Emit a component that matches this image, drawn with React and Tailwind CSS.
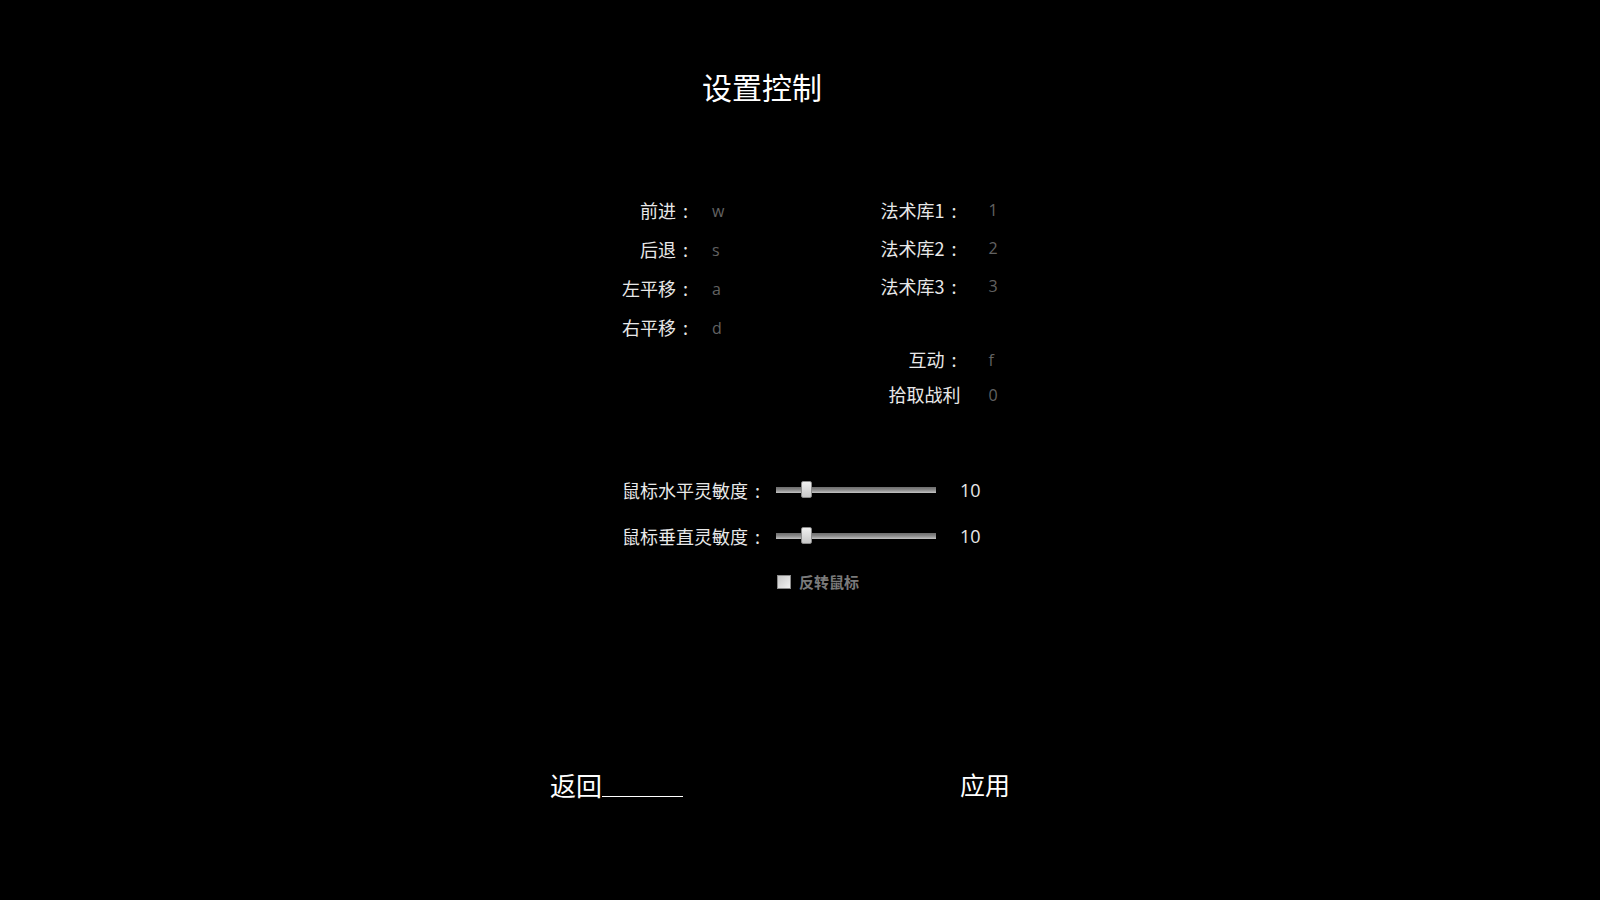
import React from "react";

const leftKeys = [
  { label: "前进", key: "w" },
  { label: "后退", key: "s" },
  { label: "左平移", key: "a" },
  { label: "右平移", key: "d" },
];

const rightKeys = [
  { label: "法术库1", key: "1" },
  { label: "法术库2", key: "2" },
  { label: "法术库3", key: "3" },
];

const extraKeys = [
  { label: "互动", key: "f", colon: true },
  { label: "拾取战利", key: "0", colon: false },
];

function Label({ text, colon = true, className = "" }) {
  return (
    <span className={`text-right text-[18px] text-[#e8e8e8] whitespace-nowrap ${className}`}>
      {text}
      {colon && <span className="ml-[7px]">:</span>}
    </span>
  );
}

function KeyRow({ label, value, colon, labelW, gap, h }) {
  return (
    <div className={`flex items-center ${h}`}>
      <Label text={label} colon={colon} className={labelW} />
      <span
        className={`${gap} text-[16px] text-[#626262] font-['Open_Sans','Noto_Sans_CJK_SC',sans-serif]`}
      >
        {value}
      </span>
    </div>
  );
}

function Slider({ label, value, thumb }) {
  return (
    <div className="flex items-center h-[46px]">
      <Label text={label} className="w-[140px] ml-[620px]" />
      <div className="relative ml-[16px] w-[160px] h-[6px] bg-gradient-to-b from-[#6c6c6c] via-[#8a8a8a] to-[#c4c4c4]">
        <div
          className="absolute top-[-6px] w-[11px] h-[17px] rounded-[2px] border border-[#8a8a8a] bg-gradient-to-b from-[#f0f0f0] to-[#c8c8c8]"
          style={{ left: thumb }}
        />
      </div>
      <span className="ml-[24px] text-[18px] text-[#e8e8e8] font-['Open_Sans','Noto_Sans_CJK_SC',sans-serif]">
        {value}
      </span>
    </div>
  );
}

export default function App() {
  return (
    <div className="w-[1600px] h-[900px] bg-black overflow-hidden font-['Noto_Sans_CJK_SC','Noto_Sans',sans-serif]">
      <div className="pt-[70px]">
        <h1 className="ml-[702px] text-[30px] leading-[32px] text-white font-normal">设置控制</h1>
      </div>

      <div className="mt-[89px] h-[224px] flex">
        <div className="ml-[588px] flex flex-col">
          {leftKeys.map((k) => (
            <KeyRow key={k.label} label={k.label} value={k.key} labelW="w-[100px]" gap="ml-[24px]" h="h-[39px]" />
          ))}
        </div>
        <div className="ml-[128px] flex flex-col">
          {rightKeys.map((k) => (
            <KeyRow key={k.label} label={k.label} value={k.key} labelW="w-[104px]" gap="ml-[32px]" h="h-[38px]" />
          ))}
          <div className="h-[37px]" />
          {extraKeys.map((k) => (
            <KeyRow
              key={k.label}
              label={k.label}
              value={k.key}
              colon={k.colon}
              labelW={k.colon ? "w-[104px]" : "w-[108px] mr-[-4px]"}
              gap="ml-[32px]"
              h="h-[35px]"
            />
          ))}
        </div>
      </div>

      <div className="mt-[52px] flex flex-col">
        <Slider label="鼠标水平灵敏度" value="10" thumb={25} />
        <Slider label="鼠标垂直灵敏度" value="10" thumb={25} />
        <label className="flex items-center h-[40px] pt-[6px]">
          <span className="ml-[777px] w-[14px] h-[14px] border border-[#8a8a8a] bg-gradient-to-br from-[#c8c8c8] to-[#f2f2f2]" />
          <span className="ml-[8px] text-[15px] font-bold text-[#7a7a7a]">反转鼠标</span>
        </label>
      </div>

      <div className="mt-[172px] flex items-center h-[27px]">
        <div className="ml-[550px] flex items-end">
          <span className="text-[26px] leading-[27px] text-white">返回</span>
          <span className="w-[81px] mb-[1px] border-b-[1.5px] border-white" />
        </div>
        <span className="ml-[277px] text-[25px] leading-[27px] text-white">应用</span>
      </div>
    </div>
  );
}
